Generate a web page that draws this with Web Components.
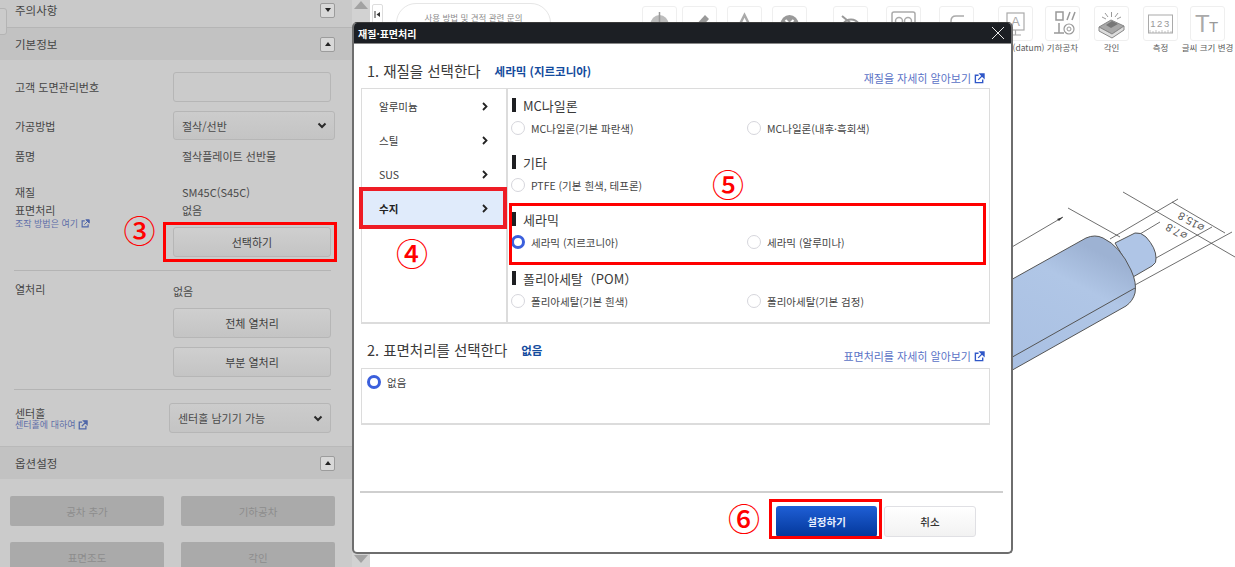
<!DOCTYPE html>
<html lang="ko">
<head>
<meta charset="utf-8">
<title>재질·표면처리</title>
<style>
html,body{margin:0;padding:0;height:100%;background:#fff;overflow:hidden}
body{font-family:"Noto Sans CJK KR","Noto Sans",sans-serif;font-size:11px;color:#333}
</style>
</head>
<body>
<x-app>
  <x-panel slot="panel">
    <x-sec-head class="first" dir-icon="down">주의사항</x-sec-head>
    <x-sec-head dir-icon="up">기본정보</x-sec-head>
    <x-form-body>
      <x-row h="30" mt="12"><span>고객 도면관리번호</span><x-field slot="ctl"></x-field></x-row>
      <x-row h="29" mt="9"><span>가공방법</span><x-select slot="ctl" w="162">절삭/선반</x-select></x-row>
      <x-row h="18" mt="7"><span>품명</span><x-value slot="ctl" pad="9">절삭플레이트 선반물</x-value></x-row>
      <x-row h="18" mt="18"><span>재질</span><x-value slot="ctl" pad="9">SM45C(S45C)</x-value></x-row>
      <x-row h="26" mt="0" top><x-lbl-link t="표면처리" l="조작 방법은 여기" tight></x-lbl-link><x-value slot="ctl" pad="9" dy="2">없음</x-value></x-row>
      <x-row h="30" mt="0"><span></span><x-gbtn slot="ctl">선택하기</x-gbtn></x-row>
      <x-rule mt="13"></x-rule>
      <x-row h="18" mt="9"><span>열처리</span><x-value slot="ctl" dy="2">없음</x-value></x-row>
      <x-row h="30" mt="10"><span></span><x-gbtn slot="ctl">전체 열처리</x-gbtn></x-row>
      <x-row h="30" mt="9"><span></span><x-gbtn slot="ctl">부분 열처리</x-gbtn></x-row>
      <x-rule mt="12"></x-rule>
      <x-row h="30" mt="13"><x-lbl-link t="센터홀" l="센터홀에 대하여"></x-lbl-link><x-select slot="ctl" w="162" shift="-4">센터홀 남기기 가능</x-select></x-row>
    </x-form-body>
    <x-sec-head class="opt" dir-icon="up">옵션설정</x-sec-head>
    <x-opt-grid>
      <x-dbtn>공차 추가</x-dbtn><x-dbtn>기하공차</x-dbtn>
      <x-dbtn>표면조도</x-dbtn><x-dbtn>각인</x-dbtn>
    </x-opt-grid>
  </x-panel>

  <x-toolbar slot="toolbar">
    <x-pill>사용 방법 및 견적 관련 문의</x-pill>
    <x-tool ml="91"><svg viewBox="0 0 35 35" width="35" height="35"><circle cx="17.5" cy="18" r="9" fill="#bdbdbd"/><path d="M17.5 6v24M8 18h19" stroke="#999" stroke-width="1.5"/></svg></x-tool>
    <x-tool ml="5"><svg viewBox="0 0 35 35" width="35" height="35"><path d="M10 27l2-6L23 9l4 4-11 12z" fill="#999"/></svg></x-tool>
    <x-tool ml="10"><svg viewBox="0 0 35 35" width="35" height="35"><path d="M17.5 9L26 26H9z" fill="none" stroke="#aaa" stroke-width="2.5"/></svg></x-tool>
    <x-tool ml="10"><svg viewBox="0 0 35 35" width="35" height="35"><circle cx="17.5" cy="18" r="9" fill="#999"/><path d="M13.5 14l8 8m0-8l-8 8" stroke="#fff" stroke-width="2"/></svg></x-tool>
    <x-tool ml="26"><svg viewBox="0 0 35 35" width="35" height="35"><path d="M9 10l17 14M10 18c4-6 12-6 16 0-4 6-12 6-16 0z" fill="none" stroke="#999" stroke-width="2"/></svg></x-tool>
    <x-tool ml="18"><svg viewBox="0 0 35 35" width="35" height="35"><rect x="6" y="6" width="23" height="20" rx="2" fill="none" stroke="#aaa" stroke-width="1.5"/><circle cx="13" cy="15" r="3.500" fill="none" stroke="#aaa" stroke-width="1.5"/><circle cx="22" cy="15" r="3.500" fill="none" stroke="#aaa" stroke-width="1.5"/></svg></x-tool>
    <x-tool ml="18"><svg viewBox="0 0 35 35" width="35" height="35"><path d="M12 26V15c0-3 2-5 5-5h8" fill="none" stroke="#aaa" stroke-width="1.500"/></svg></x-tool>
    <x-tool ml="24" wide="(datum)" shift="26"><svg viewBox="0 0 35 35" width="35" height="35"><rect x="9" y="7" width="17" height="17" fill="none" stroke="#aaa" stroke-width="1.2"/><text x="17.500" y="20" font-size="13" text-anchor="middle" fill="#aaa" font-family="Liberation Sans">A</text><path d="M17.500 24v5M12 29h11" stroke="#aaa" stroke-width="1.200"/></svg></x-tool>
    <x-tool ml="12" wide="기하공차"><svg viewBox="0 0 35 35" width="35" height="35"><path d="M11 6h7v8h-7zM22 14l3-8M27 14l3-8" fill="none" stroke="#999" stroke-width="1.500"/><path d="M14 17v10M9 27h10" stroke="#999" stroke-width="1.500"/><circle cx="24" cy="23" r="5" fill="none" stroke="#999" stroke-width="1.200"/><circle cx="24" cy="23" r="2" fill="none" stroke="#999"/></svg></x-tool>
    <x-tool ml="14" wide="각인"><svg viewBox="0 0 35 35" width="35" height="35"><path d="M5 21l12-7 13 6-12 8z" fill="#a8a8a8" stroke="#888"/><path d="M5 21v4l13 7 12-8v-4l-12 8z" fill="#ddd" stroke="#888"/><path d="M12 19l6-4 6 3-7 4z" fill="#777"/><path d="M17.500 6v5M11 7l3 4M24 7l-3 4M8 11l4 2M27 11l-4 2" stroke="#999"/></svg></x-tool>
    <x-tool ml="14" wide="측정"><svg viewBox="0 0 35 35" width="35" height="35"><rect x="5.500" y="9" width="24" height="18" fill="none" stroke="#aaa"/><text x="17.500" y="21" font-size="9.500" letter-spacing="1.500" text-anchor="middle" fill="#999" font-family="Liberation Sans">123</text><path d="M7 27v-3M10 27v-2M13 27v-3M16 27v-2M19 27v-3M22 27v-2M25 27v-3M28 27v-2" stroke="#aaa" stroke-width=".7"/></svg></x-tool>
    <x-tool ml="12" wide="글씨 크기 변경"><svg viewBox="0 0 35 35" width="35" height="35"><text x="5" y="26" font-size="24" fill="#aaa" font-family="Liberation Sans">T</text><text x="19" y="26" font-size="15" fill="#999" font-family="Liberation Sans">T</text></svg></x-tool>
  </x-toolbar>

  <x-part slot="canvas"></x-part>

  <x-dialog slot="over" heading="재질·표면처리">
    <x-step t="1. 재질을 선택한다" sel="세라믹 (지르코니아)" link="재질을 자세히 알아보기"></x-step>
    <x-mat-box>
      <x-menu-item slot="menu">알루미늄</x-menu-item>
      <x-menu-item slot="menu">스틸</x-menu-item>
      <x-menu-item slot="menu">SUS</x-menu-item>
      <x-menu-item slot="menu" active>수지</x-menu-item>
      <x-group t="MC나일론"><x-radio>MC나일론(기본 파란색)</x-radio><x-radio>MC나일론(내후·흑회색)</x-radio></x-group>
      <x-group t="기타" mt="14"><x-radio>PTFE (기본 흰색, 테프론)</x-radio></x-group>
      <x-group t="세라믹" mt="14"><x-radio checked>세라믹 (지르코니아)</x-radio><x-radio>세라믹 (알루미나)</x-radio></x-group>
      <x-group t="폴리아세탈（POM）" mt="16"><x-radio>폴리아세탈(기본 흰색)</x-radio><x-radio>폴리아세탈(기본 검정)</x-radio></x-group>
    </x-mat-box>
    <x-step second t="2. 표면처리를 선택한다" sel="없음" link="표면처리를 자세히 알아보기"></x-step>
    <x-surf-box><x-radio checked>없음</x-radio></x-surf-box>
    <x-dlg-foot></x-dlg-foot>
  </x-dialog>

  <x-frame slot="over" l="163" t="222" w="174" h="40" b="3"></x-frame>
  <x-frame slot="over" l="359" t="187" w="148" h="42" b="4" c="#ee1c25"></x-frame>
  <x-frame slot="over" l="509" t="203" w="477" h="62" b="3"></x-frame>
  <x-frame slot="over" l="769" t="499" w="113" h="40" b="3"></x-frame>
  <x-num slot="over" cx="139.500" cy="229">③</x-num>
  <x-num slot="over" cx="412" cy="252">④</x-num>
  <x-num slot="over" cx="728" cy="183">⑤</x-num>
  <x-num slot="over" cx="744" cy="517">⑥</x-num>
</x-app>

<script>
const FONT = '"Noto Sans CJK KR","Noto Sans",sans-serif';
function el(name, render, observed){
  customElements.define(name, class extends HTMLElement{
    constructor(){super(); this.attachShadow({mode:'open'});}
    connectedCallback(){ this.shadowRoot.innerHTML = render(this); }
  });
}
const extIcon = (s,c) => `<svg width="${s}" height="${s}" viewBox="0 0 12 12" style="flex:none"><path d="M9.500 7v3.500h-8v-8H5" fill="none" stroke="${c}" stroke-width="1.500"/><path d="M6.500 1h4.500v4.500zM9 3L4.500 7.500" fill="${c}" stroke="${c}" stroke-width="1.300"/></svg>`;

el('x-app', () => `<style>
:host{display:grid;grid-template-columns:370px 1fr;grid-template-rows:57px 1fr;width:1235px;height:567px;position:relative;overflow:hidden;background:#fff}
.p{grid-row:1 / 3;display:flex;overflow:hidden;min-height:0}
</style>
<div class="p"><slot name="panel"></slot></div>
<slot name="toolbar"></slot>
<slot name="canvas"></slot>
<slot name="over"></slot>`);

el('x-panel', () => `<style>
:host{display:flex;width:370px;height:567px;background:#d2d2d2;position:relative;color:#464646}
.m{width:352px;flex:none;background:#cbcbcb;display:flex;flex-direction:column;overflow:hidden}
.s{flex:1;display:flex;flex-direction:column;justify-content:space-between;align-items:center;padding:1px 0 4px}
.tri{width:0;height:0;border-left:7px solid transparent;border-right:7px solid transparent}
.u{border-bottom:8px solid #a2a2a2}.d{border-top:8px solid #a2a2a2}
.tab{position:absolute;left:-3px;top:8px;width:8px;height:25px;border:1px solid #b4b4b4;border-radius:0 3px 3px 0;background:#cbcbcb}
</style><div class="m"><slot></slot></div><div class="s"><div class="tri u"></div><div class="tri d"></div></div><div class="tab"></div>`);

el('x-sec-head', h => {
  const down = h.getAttribute('dir-icon')==='down';
  const first = h.classList.contains('first');
  const opt = h.classList.contains('opt');
  return `<style>
:host{display:flex;align-items:center;justify-content:space-between;box-sizing:border-box;flex:none;
 height:${first?28:opt?33:32}px;padding:${first?'0 17px 7px 15px':'0 17px 0 15px'};font-size:11.500px;color:#454545;
 background:${first?'#c9c9c9':'#c2c2c2'};${first?'border-bottom:1px solid #b5b5b5;':''}${opt?'border-top:1px solid #b9b9b9;margin-top:13px;':''}}
b{width:15px;height:15px;box-sizing:border-box;border:1px solid #9c9c9c;border-radius:2px;background:#d8d8d8;display:flex;align-items:center;justify-content:center}
i{width:0;height:0;border-left:3.500px solid transparent;border-right:3.500px solid transparent;${down?'border-top:4px solid #222':'border-bottom:4px solid #222'}}
</style><span><slot></slot></span><b><i></i></b>`;});

el('x-form-body', () => `<style>:host{display:block;flex:none;padding-left:15px;width:320px;font-size:11px}</style><slot></slot>`);

el('x-row', h => `<style>
:host{display:grid;grid-template-columns:158px 162px;box-sizing:border-box;height:${h.getAttribute('h')}px;margin-top:${h.getAttribute('mt')}px;align-items:${h.hasAttribute('top')?'start':'center'}}
div{line-height:14px}
</style><div><slot></slot></div><slot name="ctl"></slot>`);

el('x-field', () => `<style>:host{display:block;width:158px;height:30px;box-sizing:border-box;border:1px solid #b6b6b6;border-radius:3px;background:#cbcbcb}</style>`);

el('x-select', h => `<style>
:host{display:flex;align-items:center;justify-content:space-between;box-sizing:border-box;height:100%;width:${h.getAttribute('w')}px;margin-left:${h.getAttribute('shift')||0}px;
 padding:0 7px 0 8px;border:1px solid #b6b6b6;border-radius:3px;background:linear-gradient(#cccccc,#c4c4c4);color:#4a4a4a;font-size:11px}
</style><span><slot></slot></span><svg width="10" height="7" viewBox="0 0 10 7"><path d="M1.500 1.500L5 5l3.500-3.500" fill="none" stroke="#2a2a2a" stroke-width="2"/></svg>`);

el('x-value', h => `<style>:host{display:block;padding-left:${h.getAttribute('pad')||0}px;color:#4a4a4a;font-size:11px;line-height:14px;position:relative;top:${h.getAttribute('dy')||0}px}</style><slot></slot>`);

el('x-lbl-link', h => `<style>:host{display:block;color:#464646}
span{display:block;line-height:${h.hasAttribute('tight')?'18px':'14px'}}
a{display:flex;align-items:center;gap:3px;color:#5f6fa8;font-size:9px;line-height:11px;margin-top:${h.hasAttribute('tight')?'-1px':'-1px'}}
</style><span>${h.getAttribute('t')}</span><a>${h.getAttribute('l')}${extIcon(h.hasAttribute('tight')?9:10,'#4f66a8')}</a>`);

el('x-gbtn', () => `<style>:host{display:flex;align-items:center;justify-content:center;box-sizing:border-box;width:158px;height:30px;border:1px solid #b6b6b6;border-radius:3px;background:linear-gradient(#cfcfcf,#c4c4c4);color:#3e3e3e;font-size:11px}</style><slot></slot>`);

el('x-rule', h => `<style>:host{display:block;width:317px;margin-left:-1px;height:1px;background:#b4b4b4;margin-top:${h.getAttribute('mt')}px}</style>`);

el('x-opt-grid', () => `<style>:host{display:grid;grid-template-columns:154px 154px;column-gap:17px;row-gap:16px;padding:17px 0 0 10px;flex:none}</style><slot></slot>`);

el('x-dbtn', () => `<style>:host{display:flex;align-items:center;justify-content:center;height:30px;border-radius:2px;background:#aaaaaa;color:#8d8d8d;font-size:10.500px}</style><slot></slot>`);

el('x-toolbar', () => `<style>
:host{display:flex;align-items:flex-start;padding:6px 0 0 2px;box-sizing:border-box;height:57px;min-width:0}
.nav{width:11px;height:20px;margin-top:-2px;box-sizing:border-box;border:1px solid #ddd;border-radius:2px;display:flex;align-items:center;justify-content:center;flex:none}
.nav svg{display:block}
</style><div class="nav"><svg width="7" height="7" viewBox="0 0 7 7"><path d="M1 0v7" stroke="#333"/><path d="M6 1L2.500 3.500 6 6z" fill="#333"/></svg></div><slot></slot>`);

el('x-pill', () => `<style>
:host{display:flex;flex:none;justify-content:center;align-items:flex-start;margin:-3px 0 0 13px;width:155px;height:40px;box-sizing:border-box;border:1px solid #e6e6e6;border-radius:20px;color:#8c8c8c;font-size:8.500px;padding-top:7px;line-height:12px}
</style><slot></slot>`);

el('x-tool', h => {
  const w = h.getAttribute('wide');
  return `<style>
:host{display:flex;flex-direction:column;align-items:center;flex:none;width:35px;margin-left:${h.getAttribute('ml')}px}
.b{width:35px;height:35px;box-sizing:border-box;border:1px solid #efefef;border-radius:3px;position:relative;display:flex;align-items:center;justify-content:center}
::slotted(svg){display:block;flex:none}
span{white-space:nowrap;font-size:8.500px;line-height:12px;color:#5a5a5a;margin-top:0;margin-left:${h.getAttribute('shift')||0}px}
</style><div class="b"><slot></slot></div>${w?`<span>${w}</span>`:''}`;});

el('x-part', () => `<style>:host{display:block;position:absolute;left:1000px;top:180px;width:235px;height:210px}svg{display:block}</style>
<svg width="235" height="210" viewBox="1000 180 235 210">
<defs><linearGradient id="g" x1="0" y1="1" x2="0.500" y2="0"><stop offset="0" stop-color="#a8bfe2"/><stop offset=".75" stop-color="#b0c6e6"/><stop offset="1" stop-color="#9db2d3"/></linearGradient></defs>
<g fill="none" stroke="#4a4a4a" stroke-width=".8">
<path d="M1000 254L1063 217"/><path d="M1068 208L1120 237"/><path d="M1123 192L1235 257"/><path d="M1110 239L1178 199"/><path d="M1172 202L1225 233"/><path d="M1140 234L1160 222"/><path d="M1156 258L1212 227"/><path d="M1135 285L1232 232"/>
</g>
<path d="M1063 217l-6 2 2 2z" fill="#333"/>
<path d="M1115 243L1135 233Q1141 232 1146 237Q1156 248 1156 258Q1157 263 1152 266L1133 277L1122 255Z" fill="#afc5e6" stroke="#555" stroke-width="1"/>
<path d="M1000 286L1086 238Q1095 234 1103 238Q1120 246 1131 270Q1137 283 1135 293Q1133 301 1126 306L1000 377Z" fill="url(#g)" stroke="#555" stroke-width="1"/>
<path d="M1000 364L1135 288" fill="none" stroke="#555" stroke-width="1"/>
<text transform="translate(1191 222) rotate(210)" text-anchor="middle" dominant-baseline="central" font-family="Liberation Sans" font-size="11" fill="#555">⌀15.8</text>
<text transform="translate(1176 232) rotate(210)" text-anchor="middle" dominant-baseline="central" font-family="Liberation Sans" font-size="11" fill="#555">⌀7.8</text>
</svg>`);

el('x-dialog', h => `<style>
:host{position:absolute;left:352px;top:22px;width:661px;height:532px;box-sizing:border-box;display:flex;flex-direction:column;background:#fff;border:2px solid #6e6e6e;border-top:1px solid #3a3a3a;border-radius:5px;overflow:hidden;color:#333;z-index:1}
.bar{flex:none;height:20px;background:#1c1f24;display:flex;align-items:center;justify-content:space-between;padding:0 6px 0 4px;color:#fff;font-weight:700;font-size:10px;border-bottom:1px solid #888}
.c{flex:1;padding:0 21px 0 7px;display:flex;flex-direction:column;min-height:0}
</style><div class="bar"><span>${h.getAttribute('heading')}</span><svg width="14" height="14" viewBox="0 0 14 14"><path d="M1 1l12 12M13 1L1 13" stroke="#e8e8e8" stroke-width="1"/></svg></div><div class="c"><slot></slot></div>`);

el('x-step', h => {
  const s = h.hasAttribute('second');
  return `<style>
:host{display:flex;align-items:flex-start;flex:none;box-sizing:border-box;height:${s?44:44}px;padding:${s?16:17}px 5px 0 6px;color:#3a3a3a}
.t{font-size:14.500px;line-height:20px;white-space:nowrap}
.v{font-size:11.500px;font-weight:700;color:#134b9d;line-height:20px;margin-left:14px;white-space:nowrap}
a{margin-left:auto;display:flex;align-items:center;gap:3px;font-size:11px;line-height:14px;color:#5a72c6;margin-top:${s?9:10}px;white-space:nowrap}
</style><span class="t">${h.getAttribute('t')}</span><span class="v">${h.getAttribute('sel')}</span><a>${h.getAttribute('link')}${extIcon(11,'#2f57c8')}</a>`;});

el('x-mat-box', () => `<style>
:host{display:grid;grid-template-columns:146px 1fr;flex:none;height:236px;box-sizing:border-box;border:1px solid #dcdcdc;border-bottom-width:2px}
.l{border-right:2px solid #dcdcdc;display:flex;flex-direction:column}
.r{padding:6px 0 0 3px}
</style><div class="l"><slot name="menu"></slot></div><div class="r"><slot></slot></div>`);

el('x-menu-item', h => `<style>
:host{display:flex;align-items:center;justify-content:space-between;height:34px;box-sizing:border-box;padding:0 18px 0 17px;font-size:10.500px;color:#3c3c3c;${h.hasAttribute('active')?'background:#e0ebfb;font-weight:700;color:#222;':''}}
</style><span><slot></slot></span><svg width="6" height="9" viewBox="0 0 6 9"><path d="M1 1l3.500 3.500L1 8" fill="none" stroke="#222" stroke-width="1.800"/></svg>`);

el('x-group', h => `<style>
:host{display:block;margin-top:${h.getAttribute('mt')||0}px}
.h{display:flex;align-items:center;height:20px;font-size:13px;color:#3a3a3a;margin-left:1px}
.h i{width:4px;height:14px;background:#1e1f22;margin-right:7px}
.g{display:grid;grid-template-columns:236px 1fr;margin-top:3px}
</style><div class="h"><i></i><span>${h.getAttribute('t')}</span></div><div class="g"><slot></slot></div>`);

el('x-radio', h => {
  const c = h.hasAttribute('checked');
  return `<style>
:host{display:flex;align-items:center;height:20px;font-size:10.500px;color:#444}
i{width:14px;height:14px;box-sizing:border-box;border-radius:50%;flex:none;margin-right:6px;background:#fff;border:${c?'3.500px solid #3b5fdc':'1px solid #d6d6dc'}}
</style><i></i><span><slot></slot></span>`;});

el('x-surf-box', () => `<style>:host{display:block;flex:none;height:57px;box-sizing:border-box;border:1px solid #dcdcdc;border-bottom-width:2px;padding:3px 0 0 5px}</style><slot></slot>`);

el('x-dlg-foot', () => `<style>
:host{display:flex;justify-content:flex-end;gap:7px;flex:none;margin:66px -13px 0 -1px;padding:13px 27px 0 0;border-top:2px solid #cfcfcf}
b,u{display:flex;align-items:center;justify-content:center;height:31px;box-sizing:border-box;border-radius:3px;text-decoration:none;font-size:10.500px}
b{width:101px;background:linear-gradient(#1f5fd6,#03379a);color:#e9f0ff;font-weight:700}
u{width:92px;border:1px solid #e0e0e4;background:linear-gradient(#ffffff,#f2f2f2);color:#333;font-weight:500}
</style><b>설정하기</b><u>취소</u>`);

el('x-frame', h => `<style>:host{position:absolute;z-index:2;box-sizing:border-box;left:${h.getAttribute('l')}px;top:${h.getAttribute('t')}px;width:${h.getAttribute('w')}px;height:${h.getAttribute('h')}px;border:${h.getAttribute('b')}px solid ${h.getAttribute('c')||'#ff0000'}}</style>`);

el('x-num', h => `<style>:host{position:absolute;z-index:3;left:${h.getAttribute('cx')-20}px;top:${h.getAttribute('cy')-20}px;width:40px;height:40px;display:flex;align-items:center;justify-content:center;font-size:32px;line-height:40px;color:#ff0000;font-weight:500}</style><slot></slot>`);
</script>
</body>
</html>
